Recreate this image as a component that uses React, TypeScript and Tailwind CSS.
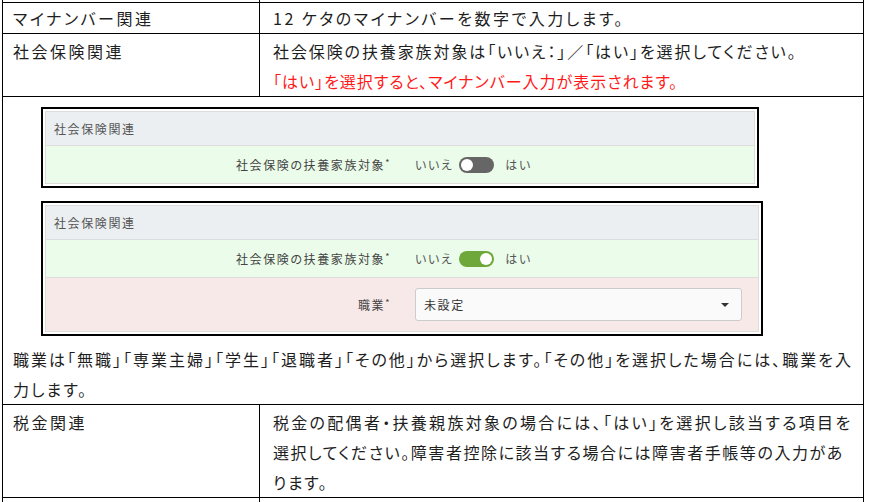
const txt =
  "text-[16px] leading-[30px] tracking-[2.5px] [font-feature-settings:'palt'] whitespace-nowrap";
const small = "text-[12px] tracking-[1.6px] [font-feature-settings:'palt'] whitespace-nowrap";

const Toggle = ({ on }: { on: boolean }) => (
  <div
    className={`w-[35px] h-[16px] rounded-full flex items-center px-[2px] ${
      on ? 'bg-[#6ea73a] justify-end' : 'bg-[#666666] justify-start'
    }`}
  >
    <div className="w-[12px] h-[12px] rounded-full bg-white" />
  </div>
);

const FieldRow = ({ label, children, bg }: { label: string; children: React.ReactNode; bg: string }) => (
  <div className={`flex items-center border-t border-[#dddddd] ${bg}`}>
    <div className={`w-[345px] text-right text-[#444] ${small}`}>
      {label}
      <span className="text-[9px] align-top">*</span>
    </div>
    <div className="ml-[24px] flex items-center">{children}</div>
  </div>
);

const Shot = ({ withJob }: { withJob: boolean }) => (
  <div className={`border-2 border-black p-[2px] ${withJob ? 'w-[722px]' : 'w-[718px]'}`}>
    <div className="border border-[#dddddd]">
      <div className={`h-[33px] flex items-center pl-[8px] bg-[#eceff2] text-[#555] ${small}`}>社会保険関連</div>
      <FieldRow label="社会保険の扶養家族対象" bg="bg-[#ebfcea] h-[38px]">
        <span className={`text-[#555] ${small}`}>いいえ</span>
        <span className="ml-[6px]">
          <Toggle on={withJob} />
        </span>
        <span className={`ml-[11px] text-[#555] ${small}`}>はい</span>
      </FieldRow>
      {withJob && (
        <FieldRow label="職業" bg="bg-[#f8e9e9] h-[54px]">
          <div className="w-[327px] h-[33px] rounded-[3px] border border-[#cccccc] bg-[#fafafa] flex items-center justify-between pl-[8px] pr-[12px]">
            <span className={`text-[#333] ${small}`}>未設定</span>
            <span className="w-0 h-0 border-x-[4px] border-x-transparent border-t-[4px] border-t-[#333]" />
          </div>
        </FieldRow>
      )}
    </div>
  </div>
);

export default function App() {
  return (
    <div className="w-[870px] h-[502px] overflow-hidden bg-white text-[#1e1e1e] font-['Noto_Sans_CJK_JP',sans-serif]">
      <div className="ml-[2px] w-[862px] border-x border-black">
        <div className="grid grid-cols-[257px_1fr] h-[2px]">
          <div className="border-r border-black" />
          <div />
        </div>

        <div className="grid grid-cols-[257px_1fr] border-t border-black">
          <div className={`border-r border-black pl-[10px] leading-[29px] ${txt}`}>マイナンバー関連</div>
          <div className={`pl-[13px] leading-[29px] ${txt}`}>12 ケタのマイナンバーを数字で入力します。</div>
        </div>

        <div className="grid grid-cols-[257px_1fr] border-t border-black">
          <div className={`border-r border-black pl-[10px] pt-[2px] ${txt}`}>社会保険関連</div>
          <div className={`pl-[13px] pt-[2px] ${txt}`}>
            <div className="tracking-[1.9px]">社会保険の扶養家族対象は「いいえ：」／「はい」を選択してください。</div>
            <div className="tracking-[1px] text-[#ff1a1a]">「はい」を選択すると、マイナンバー入力が表示されます。</div>
          </div>
        </div>

        <div className="border-t border-black">
          <div className="pt-[10px] pl-[38px] flex flex-col gap-[13px]">
            <Shot withJob={false} />
            <Shot withJob />
          </div>
          <div className={`pl-[10px] pt-[8px] ${txt}`}>
            <div className="tracking-[2px]">
              職業は「無職」「専業主婦」「学生」「退職者」「その他」から選択します。「その他」を選択した場合には、職業を入
            </div>
            <div className="tracking-[2px]">力します。</div>
          </div>
        </div>

        <div className="grid grid-cols-[257px_1fr] border-t border-black">
          <div className={`border-r border-black pl-[10px] pt-[2px] ${txt}`}>税金関連</div>
          <div className={`pl-[13px] pt-[2px] ${txt}`}>
            <div className="tracking-[2.3px]">税金の配偶者・扶養親族対象の場合には、「はい」を選択し該当する項目を</div>
            <div className="tracking-[1.55px]">選択してください。障害者控除に該当する場合には障害者手帳等の入力があ</div>
            <div className="tracking-[1.55px]">ります。</div>
          </div>
        </div>

        <div className="grid grid-cols-[257px_1fr] border-t border-black h-[10px]">
          <div className="border-r border-black" />
          <div />
        </div>
      </div>
    </div>
  );
}
